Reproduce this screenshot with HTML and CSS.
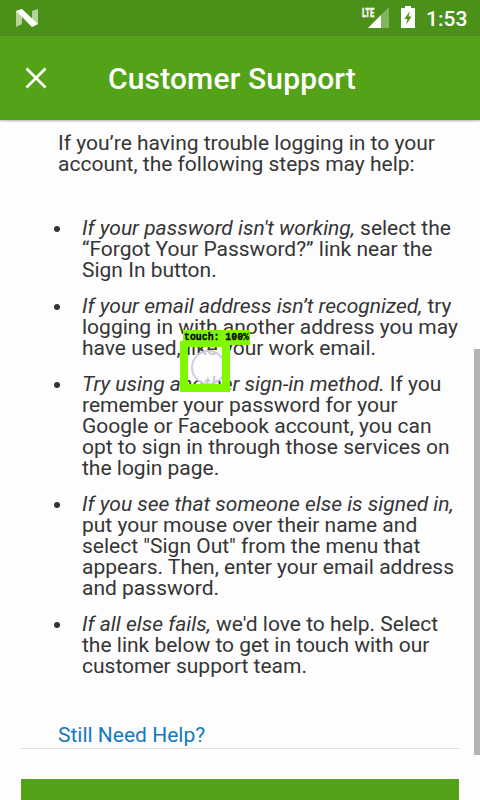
FILE: index.html
```html
<!DOCTYPE html>
<html lang="en">
<head>
<meta charset="utf-8">
<title>Customer Support</title>
<link rel="stylesheet" href="styles.css">
</head>
<body>
<div class="screen">
  <header class="status">
    <svg class="logo" width="22" height="18" viewBox="0 0 22 18"><path d="M0 2 6 0V15L0 18ZM16 2 22 0V15L16 18Z" fill="#b5d39c"/><path d="M0 2 6 0 22 15 16 18Z" fill="#fff"/></svg>
    <div class="status-right">
      <div class="signal">
        <span class="lte">LTE</span>
        <svg width="22" height="21" viewBox="0 0 22 21"><path d="M22 0V21H1Z" fill="#82b45b"/><path d="M14 8V21H1Z" fill="#fff"/></svg>
      </div>
      <svg class="battery" width="14" height="22" viewBox="0 0 14 22"><path d="M4 0H10V2H14V22H0V2H4Z" fill="#fff"/><path d="M8.8 5 3.5 13H6.5L5 19 10.5 10.5H7.5Z" fill="#4b9119"/></svg>
      <span class="clock">1:53</span>
    </div>
  </header>
  <div class="appbar">
    <svg class="close" width="22" height="22" viewBox="0 0 22 22"><path d="M1.5 1.5 20.5 20.5M20.5 1.5 1.5 20.5" stroke="#fff" stroke-width="2.7"/></svg>
    <h1>Customer Support</h1>
  </div>
  <main>
    <p class="intro">If you’re having trouble logging in to your<br>account, the following steps may help:</p>
    <ul>
      <li><em>If your password isn't working,</em> select the<br>“Forgot Your Password?” link near the<br>Sign In button.</li>
      <li><em>If your email address isn’t recognized,</em> try<br>logging in with another address you may<br>have used, like your work email.</li>
      <li><em>Try using another sign-in method.</em> If you<br>remember your password for your<br>Google or Facebook account, you can<br>opt to sign in through those services on<br>the login page.</li>
      <li><em>If you see that someone else is signed in,</em><br>put your mouse over their name and<br>select "Sign Out" from the menu that<br>appears. Then, enter your email address<br>and password.</li>
      <li><em>If all else fails,</em> we'd love to help. Select<br>the link below to get in touch with our<br>customer support team.</li>
    </ul>
    <a class="help">Still Need Help?</a>
    <div class="button"></div>
  </main>
  <div class="scrollbar"></div>
  <div class="touch"><span class="ring"></span></div>
  <svg class="touch-label" width="67" height="15"><text x="1" y="10" textLength="65" lengthAdjust="spacingAndGlyphs">touch: 100%</text></svg>
</div>
</body>
</html>
```
FILE: styles.css
```css
* { box-sizing: border-box; }
body { margin: 0; background: #fdfdfd; font-family: Roboto, "Liberation Sans", sans-serif; color: #353535; }
.screen { position: relative; width: 480px; height: 800px; overflow: hidden; }
.status { display: flex; justify-content: space-between; height: 36px; padding: 0 12px 0 16px; background: #4b9119; color: #fff; }
.logo { margin-top: 9px; }
.status-right { display: flex; }
.signal { position: relative; width: 27px; height: 36px; }
.signal svg { position: absolute; left: 5px; top: 7px; }
.lte { position: absolute; left: 0; top: 6px; font-size: 13px; line-height: 13px; font-weight: 700; transform: scaleX(.58); transform-origin: left; -webkit-text-stroke: .4px #fff; }
.battery { margin: 6px 0 0 12px; }
.clock { margin-left: 11px; width: 42px; font-size: 21px; line-height: 38px; font-weight: 500; white-space: nowrap; }
.appbar { position: relative; display: flex; align-items: center; height: 84px; padding-left: 25px; background: #54a218; box-shadow: 0 1px 2px rgba(0,0,0,.3); }
.close { flex: none; }
h1 { margin: 2px 0 0 61px; color: #fff; font-size: 30px; font-weight: 500; line-height: 36px; letter-spacing: .15px; white-space: nowrap; }
main { padding: 13px 21px 0; font-size: 21px; line-height: 21px; white-space: nowrap; }
.intro { margin: 0 0 43px 37px; }
ul { margin: 0 0 48px 61px; padding: 0; list-style: none; }
li { position: relative; margin-bottom: 15px; }
li:last-child { margin-bottom: 0; }
li::before { content: ""; position: absolute; left: -28px; top: 8px; width: 6px; height: 6px; border-radius: 50%; background: #353535; }
.help { display: block; height: 24px; padding-left: 37px; color: #1479be; border-bottom: 1px solid #e0e0e0; }
.button { margin-top: 30px; height: 30px; background: #54a218; }
.scrollbar { position: absolute; left: 474px; top: 349px; width: 6px; height: 406px; background: #b3b3b3; }
.touch { position: absolute; left: 180px; top: 341px; width: 50px; height: 51px; border: 8px solid #80f900; border-top-width: 6px; overflow: hidden; }
.ring { position: absolute; left: 3px; top: 3px; width: 35px; height: 35px; border: 2px solid rgba(200,200,224,.9); border-radius: 50%; background: rgba(253,253,253,.72); }
.touch-label { position: absolute; left: 183px; top: 330px; background: #80f900; }
.touch-label text { font: 700 11px "Liberation Mono", monospace; fill: #000; stroke: #000; stroke-width: .3px; }
```
